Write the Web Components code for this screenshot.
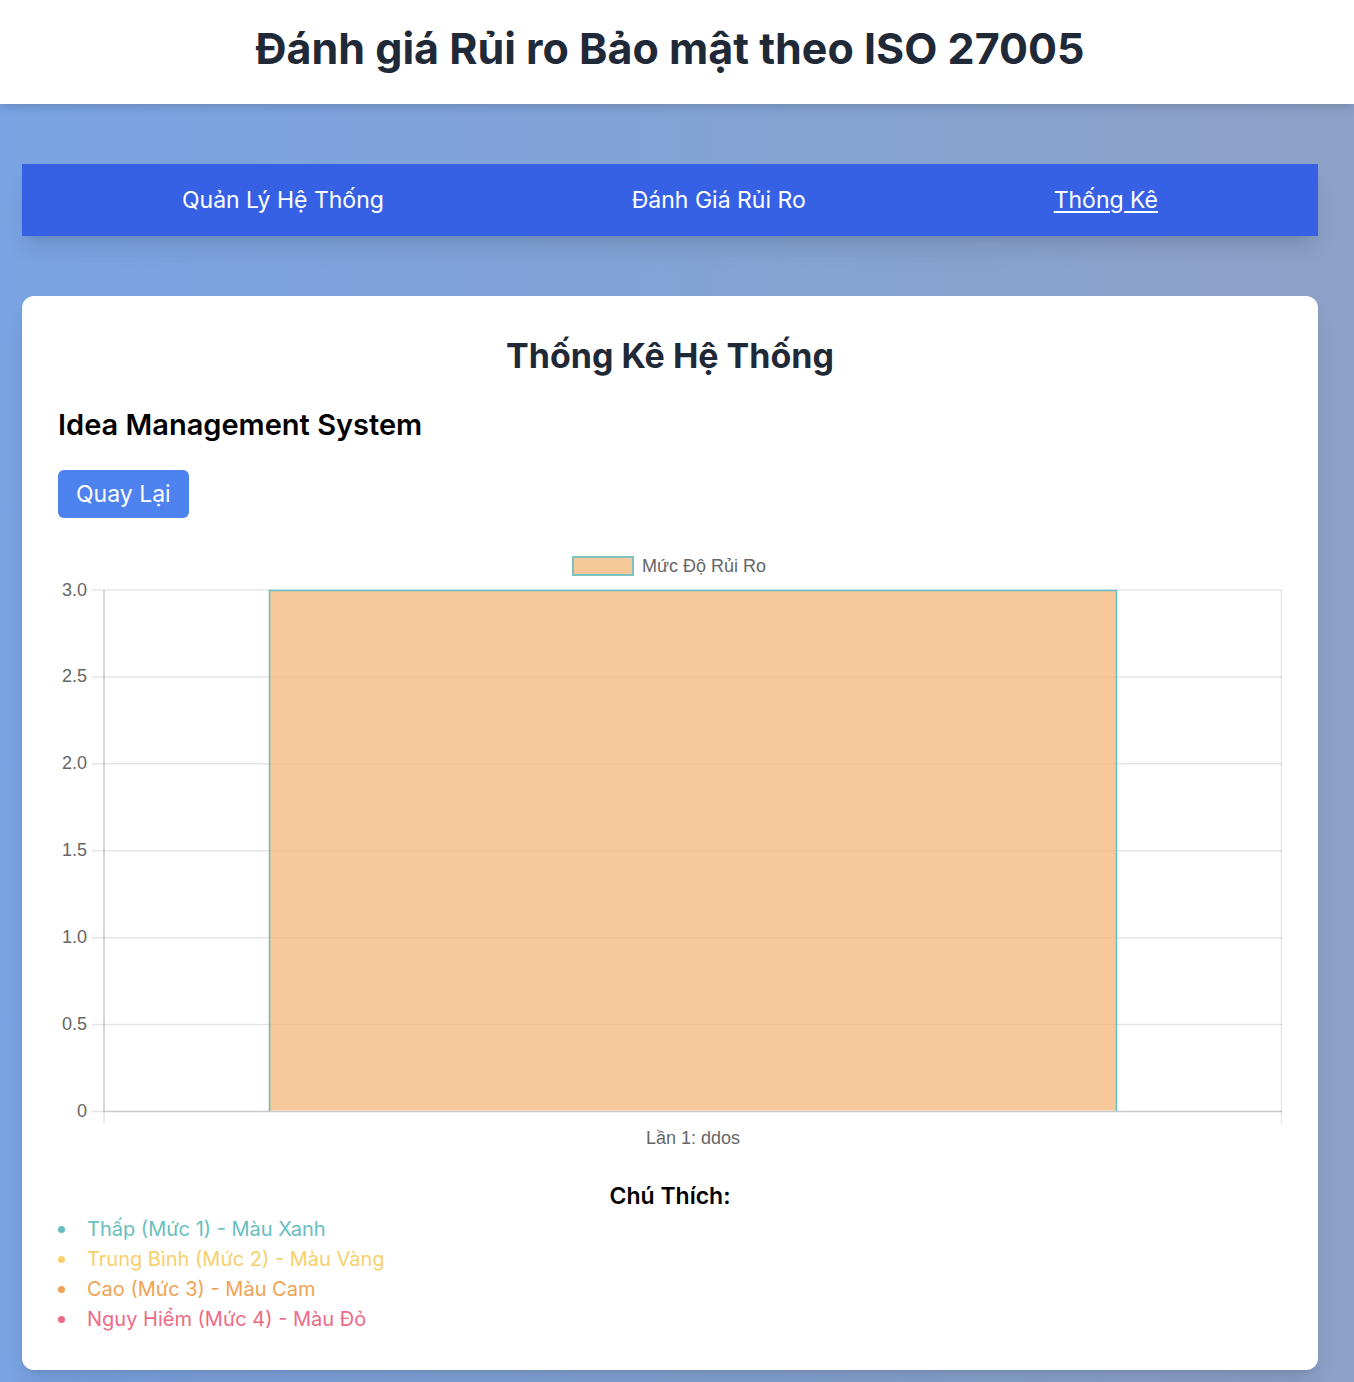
<!DOCTYPE html>
<html lang="vi">
<head>
<meta charset="utf-8">
<meta name="viewport" content="width=device-width, initial-scale=1">
<title>Đánh giá Rủi ro Bảo mật theo ISO 27005</title>
<style>
  html { min-height: 100%; background: linear-gradient(to right, #79a3e2, #8da1c7); }
  body { margin: 0; font-family: Inter, "Noto Sans", sans-serif; font-size: 23px; line-height: 36px; color: #000; }
</style>
</head>
<body>
<risk-app></risk-app>
<script>
class BaseElement extends HTMLElement {
  render(html) {
    const t = document.createElement('template');
    t.innerHTML = html;
    this.attachShadow({ mode: 'open' }).append(t.content.cloneNode(true));
  }
}

class PageHeader extends BaseElement {
  connectedCallback() {
    this.render(`<style>
      :host { display: block; background: #fff; padding: 20px 14px 28px 0;
        box-shadow: 0 6px 9px -1px rgba(0,0,0,.08), 0 3px 6px -2px rgba(0,0,0,.08); }
      h1 { margin: 0; text-align: center; font-size: 43px; line-height: 56px; font-weight: 700; color: #1f2937; }
    </style><h1><slot></slot></h1>`);
  }
}

class NavBar extends BaseElement {
  connectedCallback() {
    this.render(`<style>
      :host { display: block; background: #3761e5;
        box-shadow: 0 15px 22px -4px rgba(0,0,0,.1), 0 6px 9px -6px rgba(0,0,0,.1); }
      nav { display: flex; justify-content: space-around; padding: 18px 36px; }
    </style><nav><slot></slot></nav>`);
  }
}

class NavItem extends BaseElement {
  connectedCallback() {
    this.render(`<style>
      :host { display: block; }
      a { color: #fff; text-decoration: none; }
      :host([active]) a { text-decoration: underline; text-decoration-thickness: 2px; text-underline-offset: 3px; }
    </style><a href="#"><slot></slot></a>`);
  }
}

class StatCard extends BaseElement {
  connectedCallback() {
    this.render(`<style>
      :host { display: block; background: #fff; border-radius: 12px; padding: 36px;
        box-shadow: 0 15px 22px -4px rgba(0,0,0,.1), 0 6px 9px -6px rgba(0,0,0,.1); }
      h2 { margin: 0 0 24px; text-align: center; font-size: 34px; line-height: 48px; font-weight: 700; color: #1f2937; }
      h3 { margin: 0 0 24px; font-size: 29px; line-height: 42px; font-weight: 600; }
    </style>
    <h2>${this.getAttribute('heading')}</h2>
    <h3>${this.getAttribute('system')}</h3>
    <slot></slot>`);
  }
}

class BackButton extends BaseElement {
  connectedCallback() {
    this.render(`<style>
      :host { display: block; }
      button { display: block; border: 0; border-radius: 6px; padding: 6px 18px; background: #4e82ee; color: #fff; font: inherit; cursor: pointer; }
    </style><button type="button"><slot></slot></button>`);
  }
}

class RiskChart extends BaseElement {
  connectedCallback() {
    const top = 48, bottom = 569.5, left = 46;
    const max = 3, steps = 6;
    let grid = '', labels = '';
    for (let i = 0; i <= steps; i++) {
      const v = max * i / steps;
      const y = bottom - (bottom - top) * i / steps;
      grid += `<path d="M34 ${y}H1224"/>`;
      labels += `<text x="29" y="${Math.floor(y) + 6}" text-anchor="end">${v ? v.toFixed(1) : '0'}</text>`;
    }
    this.render(`<style>
      :host { display: block; margin: 24px 0; }
      svg { display: block; width: 100%; height: auto; }
      text { font-family: "Liberation Sans", Arial, sans-serif; font-size: 18px; fill: #666; }
    </style>
    <svg viewBox="0 0 1224 612" role="img" aria-label="Mức Độ Rủi Ro">
      <g stroke="#000" stroke-opacity=".1" stroke-width="1.5" fill="none">${grid}
        <path d="M46 48V582M1223.5 48V582"/></g>
      <path d="M${left} ${top}V${bottom}H1224" fill="none" stroke="#000" stroke-opacity=".12" stroke-width="1.5"/>
      <path d="M211 568.5V48H1059V568.5Z" fill="#f4b375" fill-opacity=".72"/>
      <path d="M211.5 569V48.5H1058.5V569" fill="none" stroke="#65bfbf" stroke-width="1.5"/>
      <rect x="515" y="15" width="60" height="18" fill="#f7c899" stroke="#7dc4c0" stroke-width="2"/>
      <text x="584" y="30">Mức Độ Rủi Ro</text>
      ${labels}
      <text x="635" y="602" text-anchor="middle">Lần 1: ddos</text>
    </svg>`);
  }
}

class LevelLegend extends BaseElement {
  connectedCallback() {
    this.render(`<style>
      :host { display: block; }
      h4 { margin: 0; text-align: center; font-size: 23px; line-height: 36px; font-weight: 600; }
      ul { margin: 0; padding: 0; list-style: none; font-size: 20px; line-height: 30px; }
      li { display: flex; align-items: center; gap: 22px; }
      li::before { content: ""; width: 7px; height: 7px; border-radius: 50%; background: currentColor; }
    </style>
    <h4>Chú Thích:</h4>
    <ul>
      <li style="color:#68bebe">Thấp (Mức 1) - Màu Xanh</li>
      <li style="color:#f8cf6a">Trung Bình (Mức 2) - Màu Vàng</li>
      <li style="color:#f1a254">Cao (Mức 3) - Màu Cam</li>
      <li style="color:#ed6a85">Nguy Hiểm (Mức 4) - Màu Đỏ</li>
    </ul>`);
  }
}

class RiskApp extends BaseElement {
  connectedCallback() {
    this.render(`<style>
      :host { display: block; }
      main { display: flex; flex-direction: column; gap: 60px; padding: 60px 36px 12px 22px; }
    </style>
    <page-header>Đánh giá Rủi ro Bảo mật theo ISO 27005</page-header>
    <main>
      <nav-bar>
        <nav-item>Quản Lý Hệ Thống</nav-item>
        <nav-item>Đánh Giá Rủi Ro</nav-item>
        <nav-item active>Thống Kê</nav-item>
      </nav-bar>
      <stat-card heading="Thống Kê Hệ Thống" system="Idea Management System">
        <back-button>Quay Lại</back-button>
        <risk-chart></risk-chart>
        <level-legend></level-legend>
      </stat-card>
    </main>`);
  }
}

customElements.define('page-header', PageHeader);
customElements.define('nav-bar', NavBar);
customElements.define('nav-item', NavItem);
customElements.define('stat-card', StatCard);
customElements.define('back-button', BackButton);
customElements.define('risk-chart', RiskChart);
customElements.define('level-legend', LevelLegend);
customElements.define('risk-app', RiskApp);
</script>
</body>
</html>
